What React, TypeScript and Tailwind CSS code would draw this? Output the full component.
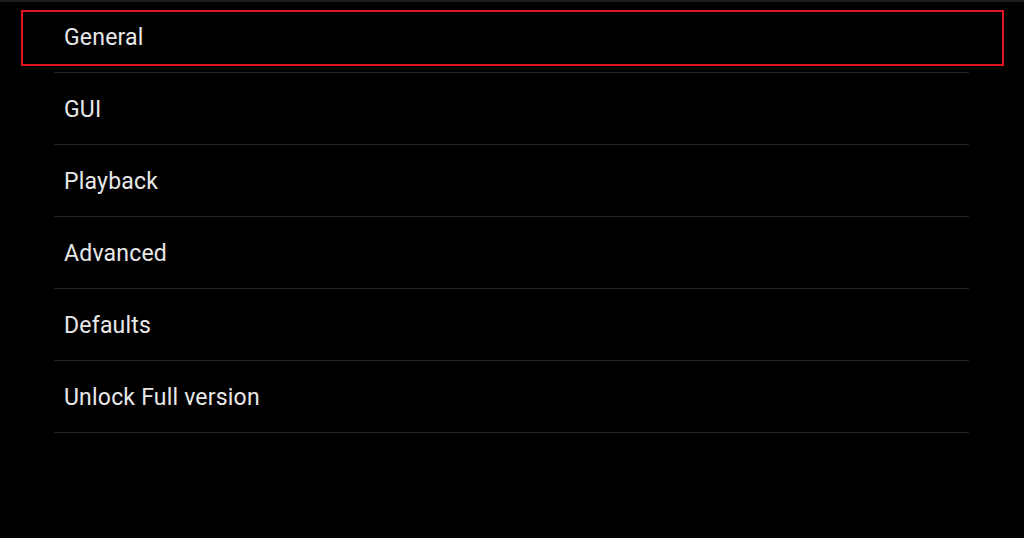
import React from "react";

const items = ["General", "GUI", "Playback", "Advanced", "Defaults", "Unlock Full version"];

export default function App() {
  return (
    <div
      className="relative w-[1024px] h-[538px] bg-black overflow-hidden"
      style={{ fontFamily: "Roboto, 'Noto Sans', sans-serif" }}
    >
      <div className="pl-[54px] pt-[1px] w-[969px]">
        {items.map((t) => (
          <div
            key={t}
            className="h-[72px] flex items-center pl-[10px] pt-[2px] border-b border-[#242424] text-[23px] tracking-[0.2px] text-[#e8e8e8] leading-none"
          >
            {t}
          </div>
        ))}
      </div>
      <div className="absolute left-0 top-0 w-full h-[2px] bg-[#1c1c1c]" />
      <div className="absolute left-[21px] top-[10px] w-[983px] h-[56px] border-2 border-[#e3141e]" />
    </div>
  );
}
